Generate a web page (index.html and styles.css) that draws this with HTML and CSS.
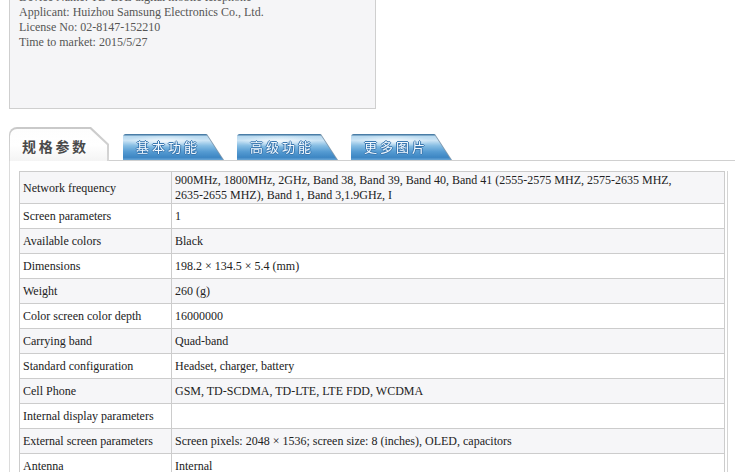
FILE: index.html
```html
<!DOCTYPE html>
<html>
<head>
<meta charset="utf-8">
<link rel="stylesheet" href="styles.css">
</head>
<body>
<div class="info">
  <div>Device Name: TD-LTE digital mobile telephone</div>
  <div>Applicant: Huizhou Samsung Electronics Co., Ltd.</div>
  <div>License No: 02-8147-152210</div>
  <div>Time to market: 2015/5/27</div>
</div>

<div class="tabs">
  <div class="tab-active"><div class="tab-active-face">规格参数</div></div>
  <div class="tabs-rest">
    <div class="tab"><div class="tab-face">基本功能</div></div>
    <div class="tab"><div class="tab-face">高级功能</div></div>
    <div class="tab"><div class="tab-face">更多图片</div></div>
  </div>
</div>

<div class="panel">
  <table class="specs">
    <tr class="odd"><td class="k">Network frequency</td><td>900MHz, 1800MHz, 2GHz, Band 38, Band 39, Band 40, Band 41 (2555-2575 MHZ, 2575-2635 MHZ, <span class="nw">2635-2655</span> MHZ), Band 1, Band 3,1.9GHz, I</td></tr>
    <tr><td class="k">Screen parameters</td><td>1</td></tr>
    <tr class="odd"><td class="k">Available colors</td><td>Black</td></tr>
    <tr><td class="k">Dimensions</td><td>198.2 × 134.5 × 5.4 (mm)</td></tr>
    <tr class="odd"><td class="k">Weight</td><td>260 (g)</td></tr>
    <tr><td class="k">Color screen color depth</td><td>16000000</td></tr>
    <tr class="odd"><td class="k">Carrying band</td><td>Quad-band</td></tr>
    <tr><td class="k">Standard configuration</td><td>Headset, charger, battery</td></tr>
    <tr class="odd"><td class="k">Cell Phone</td><td>GSM, TD-SCDMA, TD-LTE, LTE FDD, WCDMA</td></tr>
    <tr><td class="k">Internal display parameters</td><td></td></tr>
    <tr class="odd"><td class="k">External screen parameters</td><td>Screen pixels: 2048 × 1536; screen size: 8 (inches), OLED, capacitors</td></tr>
    <tr><td class="k">Antenna</td><td>Internal</td></tr>
  </table>
</div>
</body>
</html>
```

FILE: styles.css
```css
html, body {
  margin: 0;
  padding: 0;
  background: #ffffff;
  overflow: hidden;
}

body {
  font-family: "Liberation Serif", "Times New Roman", serif;
  font-size: 12px;
  color: #222;
}

.info {
  box-sizing: border-box;
  width: 367px;
  height: 123px;
  margin: -14px 0 0 9px;
  padding: 3px 9px;
  border: 1px solid #cfcfcf;
  background: #f5f5f7;
  color: #555;
  line-height: 15px;
}

.tabs {
  display: flex;
  margin: 18px 0 0 9px;
  height: 34px;
}

.tab-active {
  box-sizing: border-box;
  width: 100px;
  height: 34px;
  padding: 2px 2px 0 1px;
  background: linear-gradient(180deg, #c9c9c9, #d6d6d6);
  border-radius: 8px 0 0 0;
  clip-path: polygon(0 0, 82px 0, 100% 17px, 100% 100%, 0 100%);
  flex: none;
}

.tab-active-face {
  box-sizing: border-box;
  height: 100%;
  padding: 7px 0 0 12px;
  background: linear-gradient(180deg, #fdfdfd 0%, #ffffff 50%, #f4f4f4 100%);
  border-radius: 7px 0 0 0;
  clip-path: polygon(0 0, 80px 0, 100% 16px, 100% 100%, 0 100%);
  font-family: "Noto Sans CJK SC", "Noto Sans", sans-serif;
  font-weight: 700;
  font-size: 14px;
  line-height: 20px;
  letter-spacing: 2.7px;
  color: #4a4a4a;
}

.tabs-rest {
  flex: 1;
  display: flex;
  align-items: flex-end;
  gap: 14px;
  padding-left: 14px;
  box-sizing: border-box;
  height: 34px;
  border-bottom: 1px solid #d0d0d0;
}

.tab {
  width: 100px;
  height: 26px;
  filter: drop-shadow(1px 0 0 #7f98ad);
}

.tab-face {
  box-sizing: border-box;
  height: 100%;
  padding: 3px 0 0 13px;
  border-radius: 3px 0 0 0;
  clip-path: polygon(0 0, 83px 0, 100% 100%, 0 100%);
  background:
    radial-gradient(ellipse 38px 6px at 42% 28%, rgba(255,255,255,0.75), rgba(255,255,255,0) 100%),
    linear-gradient(180deg, #4a7da6 0, #4a7da6 1px, #b6d8ef 2px, #cbe4f5 25%, #86bde3 45%, #559bd2 68%, #3d86c3 90%, #6aa6d6 100%);
  font-family: "Noto Sans CJK SC", "Noto Sans", sans-serif;
  font-size: 13px;
  line-height: 20px;
  letter-spacing: 3px;
  color: #f2f9ff;
  text-shadow:
    1px 0 0 #3b78b0,
    -1px 0 0 #3b78b0,
    0 1px 0 #3b78b0,
    0 -1px 0 #3b78b0;
}

.panel {
  margin-left: 9px;
  padding: 10px 0 0 9px;
  border-left: 1px solid #dcdcdc;
}

.specs {
  border-collapse: collapse;
  width: 706px;
  box-shadow: 2px 0 0 #ffffff, 3px 0 0 #d4d4d4;
  table-layout: fixed;
}

.specs td {
  border: 1px solid #cccccc;
  padding: 1px 3px 0;
  height: 25px;
  box-sizing: border-box;
  line-height: 15px;
  vertical-align: middle;
  color: #222;
}

.specs td.k {
  width: 152px;
}

.specs .nw {
  white-space: nowrap;
}

.specs tr.odd td {
  background: #f6f6f8;
}
```
